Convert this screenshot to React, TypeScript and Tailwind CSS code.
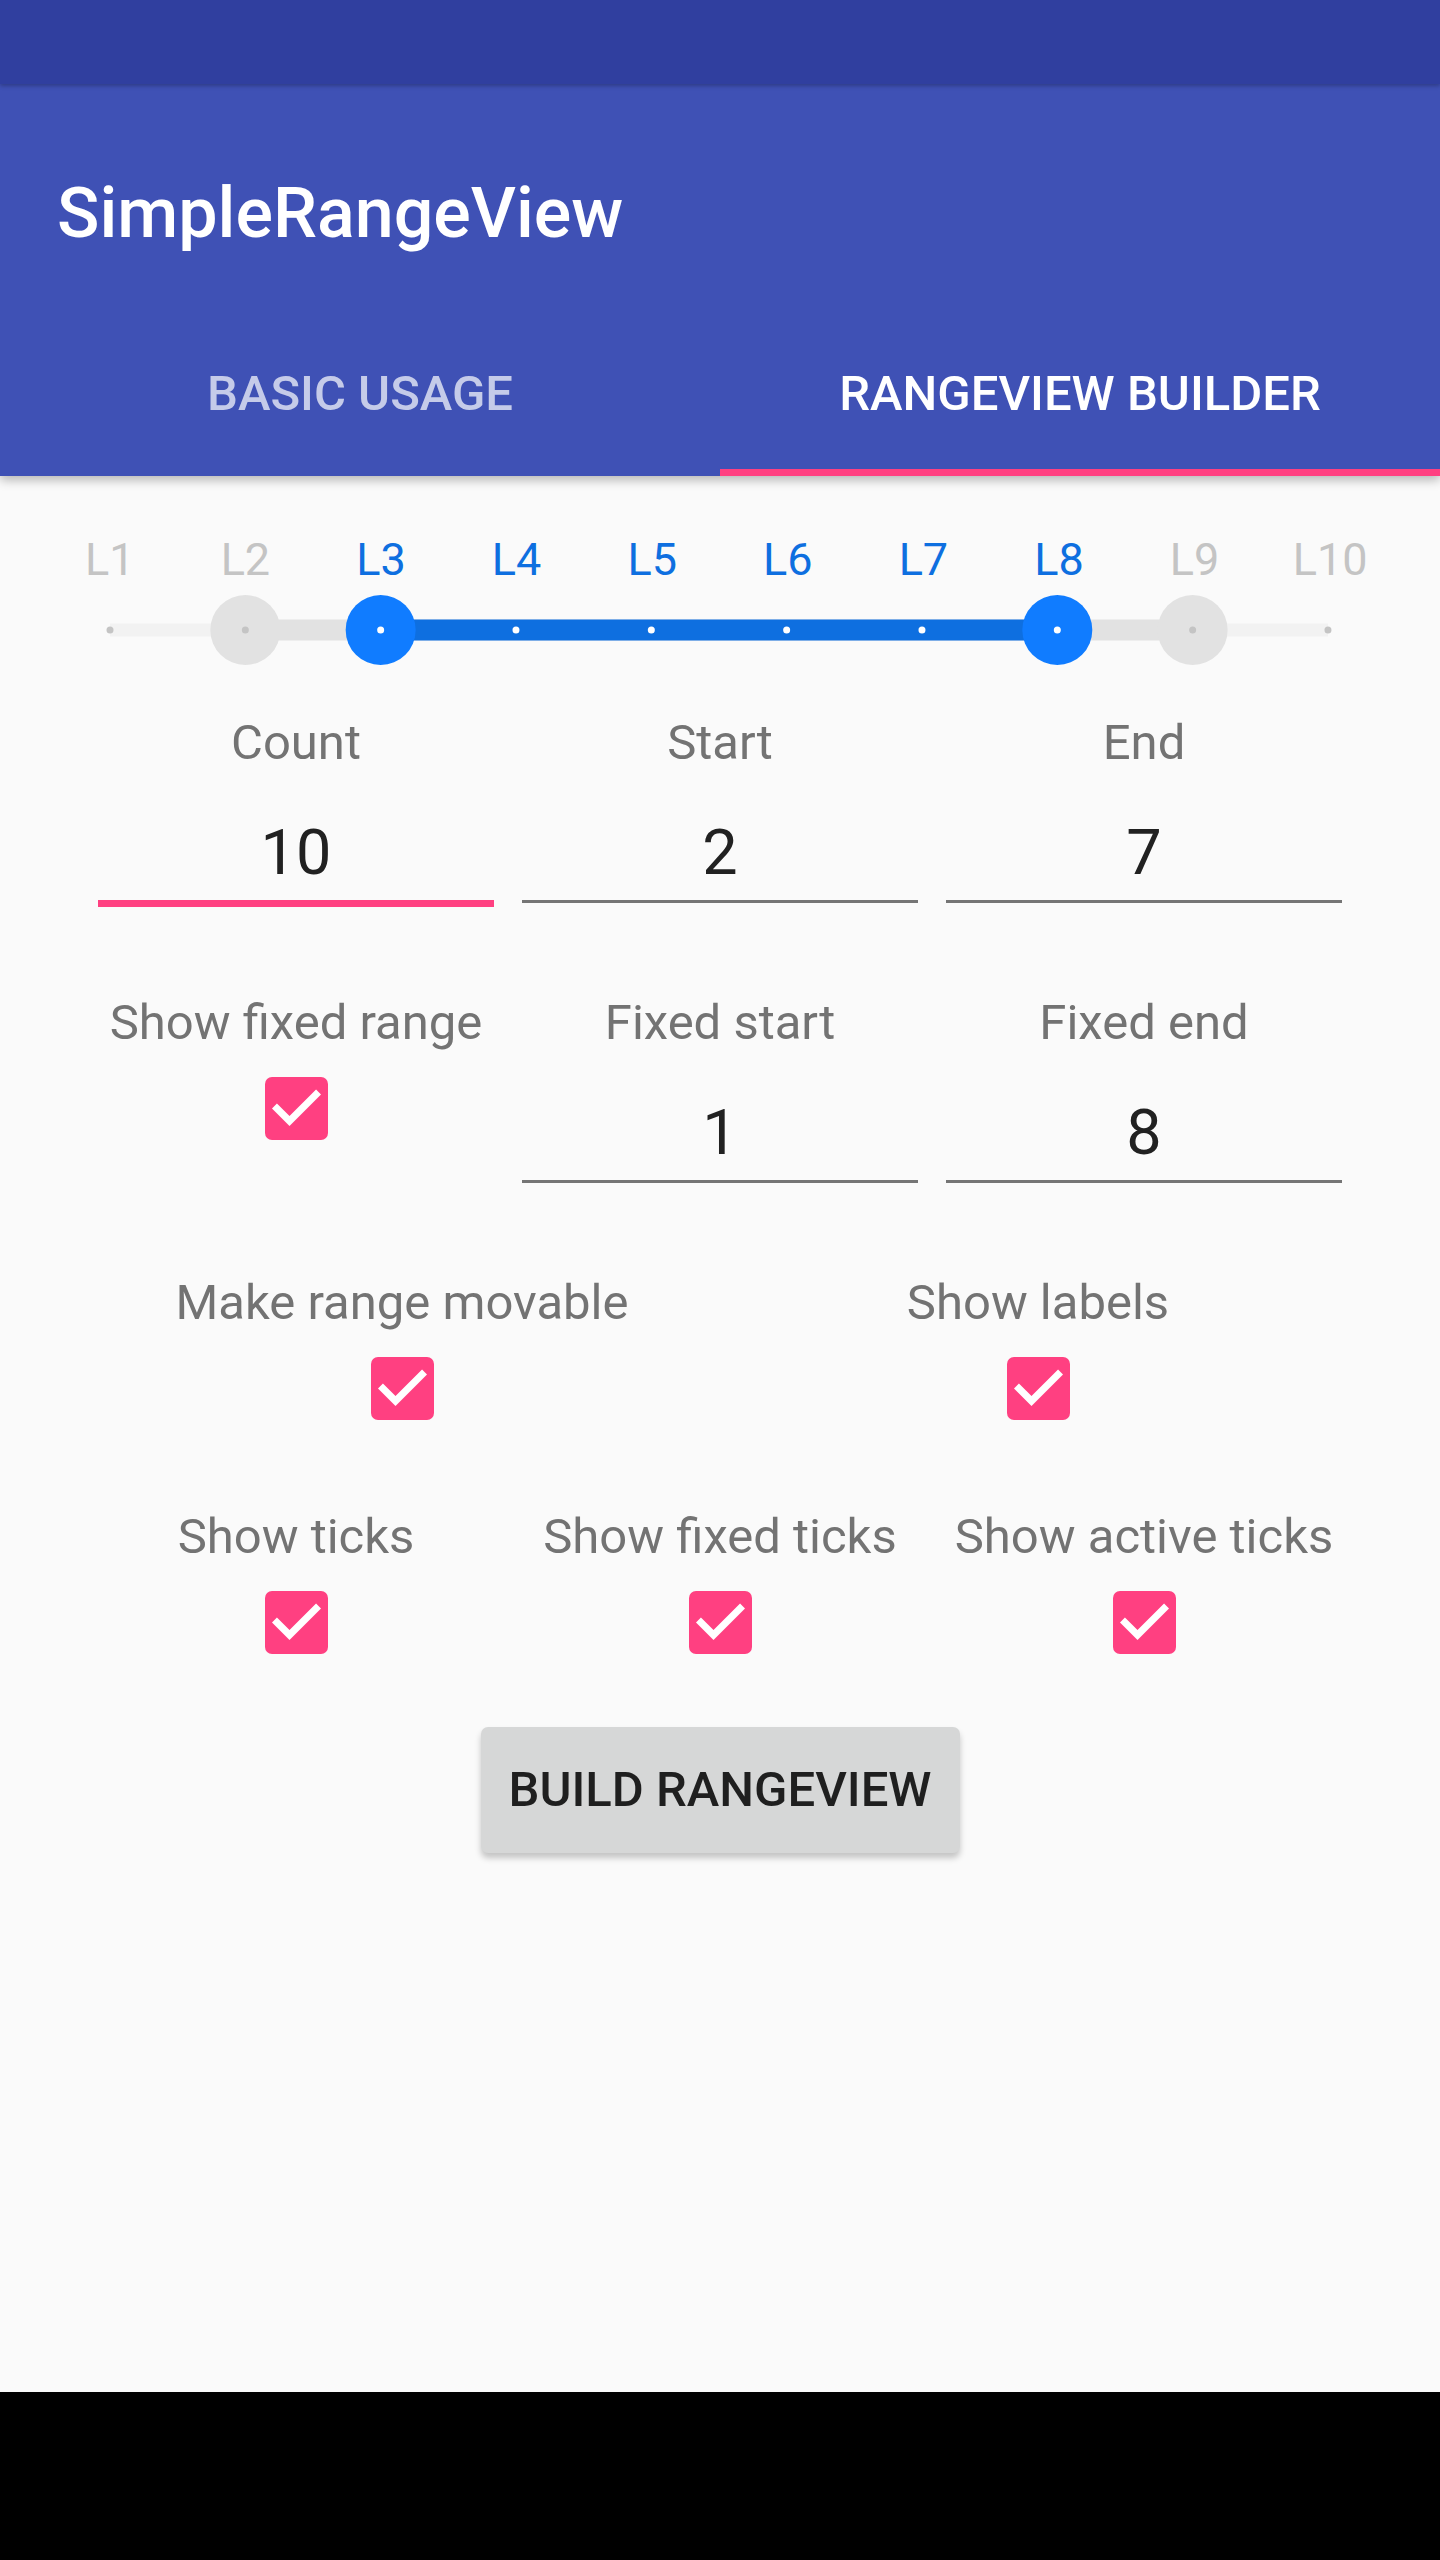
import React from "react";

const LABELS = ["L1", "L2", "L3", "L4", "L5", "L6", "L7", "L8", "L9", "L10"];
const ACTIVE = [2, 3, 4, 5, 6, 7];
const X0 = 110;
const STEP = 135.33;

function Checkbox() {
  return (
    <svg width="63" height="63" viewBox="3 3 18 18" className="block">
      <rect x="3" y="3" width="18" height="18" rx="2" fill="#ff4081" />
      <path d="M10 17l-5-5 1.41-1.41L10 14.17l7.59-7.59L19 8l-9 9z" fill="#ffffff" />
    </svg>
  );
}

function RangeTrack() {
  const cx = (i: number) => X0 + STEP * i;
  return (
    <svg width="1440" height="70" viewBox="0 0 1440 70" className="block">
      <line x1={cx(0)} y1="35" x2={cx(9)} y2="35" stroke="#f2f2f2" strokeWidth="13" />
      <line x1={cx(1)} y1="35" x2={cx(8)} y2="35" stroke="#e2e2e2" strokeWidth="21" />
      <line x1={cx(2)} y1="35" x2={cx(7)} y2="35" stroke="#0e6fe0" strokeWidth="21" />
      <circle cx={cx(1)} cy="35" r="35" fill="#e2e2e2" />
      <circle cx={cx(8)} cy="35" r="35" fill="#e2e2e2" />
      <circle cx={cx(2)} cy="35" r="35" fill="#107cff" />
      <circle cx={cx(7)} cy="35" r="35" fill="#107cff" />
      {LABELS.map((_, i) => (
        <circle
          key={i}
          cx={cx(i)}
          cy="35"
          r="3.5"
          fill={ACTIVE.includes(i) ? "#ffffff" : "#c4c4c4"}
        />
      ))}
    </svg>
  );
}

function Label({ children }: { children: React.ReactNode }) {
  return (
    <div className="text-center text-[49px] leading-[57px] text-[#737373] whitespace-nowrap">
      {children}
    </div>
  );
}

function Field({
  label,
  value,
  focused,
  first,
}: {
  label: string;
  value: string;
  focused?: boolean;
  first?: boolean;
}) {
  return (
    <div className={`flex flex-col ${first ? "mt-[49px]" : ""}`}>
      <Label>{label}</Label>
      <div className="mt-[45px] text-center text-[63px] leading-[74px] text-[#212121]">
        {value}
      </div>
      <div
        className={
          focused
            ? "mx-[14px] mt-[10px] h-[7px] bg-[#ff4081]"
            : "mx-[14px] mt-[10px] h-[3px] bg-[#757575]"
        }
      />
    </div>
  );
}

function CheckItem({ label }: { label: string }) {
  return (
    <div className="flex flex-col items-center">
      <Label>{label}</Label>
      <div className="mt-[26px]">
        <Checkbox />
      </div>
    </div>
  );
}

export default function App() {
  return (
    <div
      className="w-[1440px] h-[2560px] flex flex-col bg-[#fafafa] overflow-hidden"
      style={{ fontFamily: "Roboto, 'Noto Sans', sans-serif" }}
    >
      <div className="relative z-20 flex flex-col shadow-[0_4px_10px_rgba(0,0,0,0.28)]">
        <div className="h-[84px] bg-[#303f9f] shadow-[0_2px_4px_rgba(0,0,0,0.25)] relative z-10" />
        <div className="h-[224px] bg-[#3f51b5] pl-[57px] pt-[88px]">
          <div className="text-[70px] leading-[82px] font-medium text-white">SimpleRangeView</div>
        </div>
        <div className="h-[168px] bg-[#3f51b5] grid grid-cols-2">
          <div className="flex flex-col justify-between">
            <div className="pt-[57px] text-center text-[49px] leading-[57px] font-medium text-[#c5cbe9]">
              BASIC USAGE
            </div>
            <div className="h-[7px]" />
          </div>
          <div className="flex flex-col justify-between">
            <div className="pt-[57px] text-center text-[49px] leading-[57px] font-medium text-white">
              RANGEVIEW BUILDER
            </div>
            <div className="h-[7px] bg-[#ff4081]" />
          </div>
        </div>
      </div>

      <div className="flex-1 flex flex-col">
        <div className="pt-[57px] px-[42px] grid grid-cols-10">
          {LABELS.map((l, i) => (
            <div
              key={l}
              className={`text-center text-[45px] leading-[53px] ${
                ACTIVE.includes(i) ? "text-[#0e6fe0]" : "text-[#c4c4c4]"
              }`}
            >
              {l}
            </div>
          ))}
        </div>
        <div className="mt-[9px]">
          <RangeTrack />
        </div>

        <div className="px-[84px] grid grid-cols-3 mt-[49px]">
          <Field label="Count" value="10" focused />
          <Field label="Start" value="2" />
          <Field label="End" value="7" />
        </div>

        <div className="px-[84px] grid grid-cols-3 mt-[87px]">
          <CheckItem label="Show fixed range" />
          <Field label="Fixed start" value="1" />
          <Field label="Fixed end" value="8" />
        </div>

        <div className="px-[84px] grid grid-cols-2 mt-[91px]">
          <CheckItem label="Make range movable" />
          <CheckItem label="Show labels" />
        </div>

        <div className="px-[84px] grid grid-cols-3 mt-[88px]">
          <CheckItem label="Show ticks" />
          <CheckItem label="Show fixed ticks" />
          <CheckItem label="Show active ticks" />
        </div>

        <div className="mt-[73px] flex justify-center">
          <div className="w-[479px] h-[126px] rounded-[7px] bg-[#d6d7d7] shadow-[0_5px_6px_rgba(0,0,0,0.22)] flex items-center justify-center text-[49px] font-medium text-[#1f1f1f]">
            BUILD RANGEVIEW
          </div>
        </div>
      </div>

      <div className="h-[168px] bg-black" />
    </div>
  );
}
